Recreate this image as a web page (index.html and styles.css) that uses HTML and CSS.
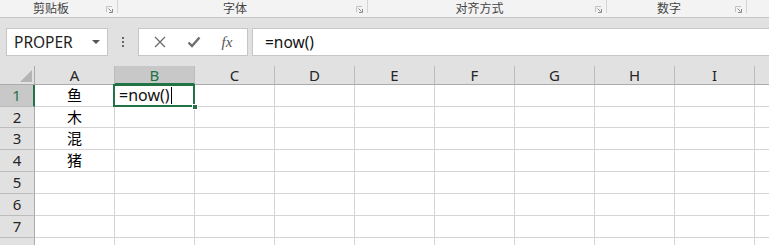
FILE: index.html
```html
<!DOCTYPE html>
<html lang="zh-CN">
<head>
    <meta charset="UTF-8">
    <title>Excel - =now()</title>
    <link rel="stylesheet" href="styles.css">
</head>
<body>
    <!-- 功能区分组标签 -->
    <div class="ribbon">
        <div class="group g-clip">
            <span class="group-label">剪贴板</span>
            <span class="launcher"><svg width="7" height="7" viewBox="0 0 7 7"><path d="M0.5 6V0.5H6" fill="none" stroke="#c2c2c2"/><path d="M2.5 2.5L5.5 5.5M3 6.5H6.5V3" fill="none" stroke="#8a8a8a"/></svg></span>
        </div>
        <div class="group g-font">
            <span class="group-label">字体</span>
            <span class="launcher"><svg width="7" height="7" viewBox="0 0 7 7"><path d="M0.5 6V0.5H6" fill="none" stroke="#c2c2c2"/><path d="M2.5 2.5L5.5 5.5M3 6.5H6.5V3" fill="none" stroke="#8a8a8a"/></svg></span>
        </div>
        <div class="group g-align">
            <span class="group-label">对齐方式</span>
            <span class="launcher"><svg width="7" height="7" viewBox="0 0 7 7"><path d="M0.5 6V0.5H6" fill="none" stroke="#c2c2c2"/><path d="M2.5 2.5L5.5 5.5M3 6.5H6.5V3" fill="none" stroke="#8a8a8a"/></svg></span>
        </div>
        <div class="group g-number">
            <span class="group-label">数字</span>
            <span class="launcher"><svg width="7" height="7" viewBox="0 0 7 7"><path d="M0.5 6V0.5H6" fill="none" stroke="#c2c2c2"/><path d="M2.5 2.5L5.5 5.5M3 6.5H6.5V3" fill="none" stroke="#8a8a8a"/></svg></span>
        </div>
    </div>

    <!-- 编辑栏 -->
    <div class="formula-bar">
        <div class="name-box">
            <span>PROPER</span>
            <span class="drop-arrow"></span>
        </div>
        <div class="grip"><i></i><i></i><i></i></div>
        <div class="fx-box">
            <svg class="fx-btn" width="12" height="12" viewBox="0 0 12 12"><path d="M1 1L11 11M11 1L1 11" stroke="#6d6d6d" stroke-width="1.3"/></svg>
            <svg class="fx-btn" width="14" height="12" viewBox="0 0 14 12"><path d="M1.5 6.5L5 10L12.5 1.5" fill="none" stroke="#6d6d6d" stroke-width="2.4"/></svg>
            <span class="fx-btn fx">fx</span>
        </div>
        <div class="formula-input">=now()</div>
    </div>

    <!-- 工作表 -->
    <div class="sheet">
        <div class="corner"><span class="corner-tri"></span></div>
        <div class="col-head">A</div>
        <div class="col-head selected">B</div>
        <div class="col-head">C</div>
        <div class="col-head">D</div>
        <div class="col-head">E</div>
        <div class="col-head">F</div>
        <div class="col-head">G</div>
        <div class="col-head">H</div>
        <div class="col-head">I</div>
        <div class="col-head"></div>

        <div class="row-head selected">1</div>
        <div class="cell center">鱼</div>
        <div class="cell active">=now()<span class="text-caret"></span><span class="fill-handle"></span></div>
        <div class="cell"></div><div class="cell"></div><div class="cell"></div><div class="cell"></div><div class="cell"></div><div class="cell"></div><div class="cell"></div><div class="cell"></div>

        <div class="row-head">2</div>
        <div class="cell center">木</div>
        <div class="cell"></div><div class="cell"></div><div class="cell"></div><div class="cell"></div><div class="cell"></div><div class="cell"></div><div class="cell"></div><div class="cell"></div><div class="cell"></div>

        <div class="row-head">3</div>
        <div class="cell center">混</div>
        <div class="cell"></div><div class="cell"></div><div class="cell"></div><div class="cell"></div><div class="cell"></div><div class="cell"></div><div class="cell"></div><div class="cell"></div><div class="cell"></div>

        <div class="row-head">4</div>
        <div class="cell center">猪</div>
        <div class="cell"></div><div class="cell"></div><div class="cell"></div><div class="cell"></div><div class="cell"></div><div class="cell"></div><div class="cell"></div><div class="cell"></div><div class="cell"></div>

        <div class="row-head">5</div>
        <div class="cell"></div><div class="cell"></div><div class="cell"></div><div class="cell"></div><div class="cell"></div><div class="cell"></div><div class="cell"></div><div class="cell"></div><div class="cell"></div><div class="cell"></div>

        <div class="row-head">6</div>
        <div class="cell"></div><div class="cell"></div><div class="cell"></div><div class="cell"></div><div class="cell"></div><div class="cell"></div><div class="cell"></div><div class="cell"></div><div class="cell"></div><div class="cell"></div>

        <div class="row-head">7</div>
        <div class="cell"></div><div class="cell"></div><div class="cell"></div><div class="cell"></div><div class="cell"></div><div class="cell"></div><div class="cell"></div><div class="cell"></div><div class="cell"></div><div class="cell"></div>

        <!-- 第8行只露出顶边 -->
        <div class="row-head"></div>
        <div class="cell"></div><div class="cell"></div><div class="cell"></div><div class="cell"></div><div class="cell"></div><div class="cell"></div><div class="cell"></div><div class="cell"></div><div class="cell"></div><div class="cell"></div>
    </div>
</body>
</html>
```

FILE: styles.css
```css
/* 基础重置 */
* {
    margin: 0;
    padding: 0;
    box-sizing: border-box;
}

body {
    width: 769px;
    height: 245px;
    overflow: hidden;
    background-color: #e1e1e1;
    font-family: "Noto Sans", "Noto Sans CJK SC", sans-serif;
    color: #000;
}

/* 功能区标签行 */
.ribbon {
    display: flex;
    height: 18px;
    background-color: #f3f3f3;
    border-bottom: 1px solid #c6c6c6;
}

.group {
    display: flex;
    align-items: flex-start;
    border-right: 1px solid transparent;
    position: relative;
}

/* 分组分隔线（只画上半段） */
.group::after {
    content: "";
    position: absolute;
    right: -1px;
    top: 0;
    width: 1px;
    height: 13px;
    background-color: #d5d5d5;
}

.g-clip { width: 118px; }
.g-font { width: 250px; }
.g-align { width: 239px; }
.g-number { width: 140px; }

.group-label {
    flex: 1;
    text-align: center;
    font-family: "Noto Sans CJK SC", sans-serif;
    font-size: 12px;
    line-height: 15px;
    color: #444;
}

.launcher {
    width: 15px;
    padding-top: 6px;
    display: flex;
    justify-content: flex-end;
    padding-right: 4px;
}

/* 编辑栏 */
.formula-bar {
    display: flex;
    height: 28px;
    margin-top: 10px;
}

.name-box {
    display: flex;
    align-items: center;
    justify-content: space-between;
    width: 102px;
    margin-left: 6px;
    padding: 0 7px 0 7px;
    background-color: #fff;
    border: 1px solid #c6c6c6;
    font-size: 15.5px;
    color: #1e1e1e;
}

.drop-arrow {
    width: 0;
    height: 0;
    border-left: 4px solid transparent;
    border-right: 4px solid transparent;
    border-top: 4px solid #555;
}

.grip {
    width: 30px;
    display: flex;
    flex-direction: column;
    align-items: center;
    justify-content: center;
    gap: 2px;
}

.grip i {
    width: 2px;
    height: 2px;
    background-color: #666;
}

.fx-box {
    display: flex;
    align-items: center;
    justify-content: space-around;
    width: 110px;
    padding: 0 4px;
    background-color: #fff;
    border: 1px solid #c6c6c6;
}

.fx {
    font-family: "Liberation Serif", serif;
    font-style: italic;
    font-size: 15px;
    color: #555;
}

.formula-input {
    flex: 1;
    margin-left: 4px;
    padding-left: 12px;
    background-color: #fff;
    border-top: 1px solid #c6c6c6;
    border-bottom: 1px solid #c6c6c6;
    border-left: 1px solid #c6c6c6;
    font-size: 15.5px;
    line-height: 26px;
    color: #111;
}

/* 工作表网格 */
.sheet {
    display: grid;
    grid-template-columns: 35px repeat(10, 80px);
    grid-template-rows: 19px 22px 21px 22px 22px 22px 22px 22px 22px;
    width: 769px;
    height: 179px;
    overflow: hidden;
    margin-top: 10px;
    background-color: #fff;
}

.corner {
    position: relative;
    background-color: #e1e1e1;
    border-right: 1px solid #ababab;
    border-bottom: 1px solid #ababab;
}

.corner-tri {
    position: absolute;
    right: 2px;
    bottom: 2px;
    width: 0;
    height: 0;
    border-left: 12px solid transparent;
    border-bottom: 12px solid #b4b4b4;
}

.col-head {
    background-color: #e1e1e1;
    border-right: 1px solid #bcbcbc;
    border-bottom: 1px solid #ababab;
    text-align: center;
    font-size: 15px;
    line-height: 18px;
    color: #262626;
}

.col-head.selected {
    background-color: #c8c8c8;
    color: #217346;
    border-bottom: 2px solid #217346;
}

.row-head {
    background-color: #e1e1e1;
    border-right: 1px solid #ababab;
    border-bottom: 1px solid #bcbcbc;
    text-align: center;
    font-size: 15px;
    line-height: 21px;
    color: #262626;
}

.row-head.selected {
    background-color: #c8c8c8;
    color: #217346;
    border-right: 2px solid #217346;
}

.cell {
    border-right: 1px solid #d4d4d4;
    border-bottom: 1px solid #d4d4d4;
    font-size: 15px;
    line-height: 20px;
    padding-left: 4px;
    white-space: nowrap;
}

.cell.center {
    text-align: center;
    padding-left: 0;
    font-family: "Noto Sans CJK SC", sans-serif;
}

/* 活动单元格 */
.cell.active {
    position: relative;
    font-size: 16px;
    line-height: 21px;
    color: #111;
}

.cell.active::after {
    content: "";
    position: absolute;
    left: -2px;
    top: -1px;
    right: -1px;
    bottom: -1px;
    border: 2px solid #217346;
}

.text-caret {
    display: inline-block;
    width: 1px;
    height: 17px;
    margin-left: 1px;
    vertical-align: -3px;
    background-color: #000;
}

.fill-handle {
    position: absolute;
    right: -4px;
    bottom: -4px;
    width: 6px;
    height: 6px;
    background-color: #217346;
    border: 1px solid #fff;
    z-index: 1;
}
```
